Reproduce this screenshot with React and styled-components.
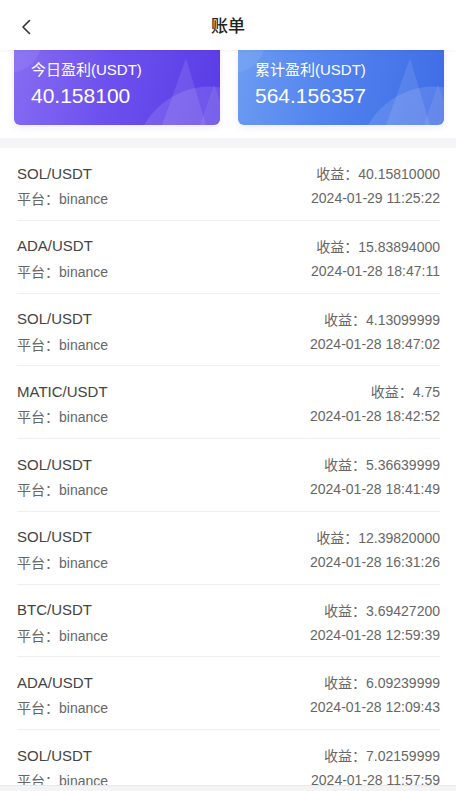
import React from 'react'
import styled, { createGlobalStyle } from 'styled-components'

const GlobalStyle = createGlobalStyle`
    html, body {
        margin: 0;
        padding: 0;
        background: #fff;
        font-family: "Liberation Sans", "Noto Sans CJK SC", sans-serif;
    }
    * {
        box-sizing: border-box;
    }
`

const records = [
    { pair: 'SOL/USDT', profit: '40.15810000', time: '2024-01-29 11:25:22' },
    { pair: 'ADA/USDT', profit: '15.83894000', time: '2024-01-28 18:47:11' },
    { pair: 'SOL/USDT', profit: '4.13099999', time: '2024-01-28 18:47:02' },
    { pair: 'MATIC/USDT', profit: '4.75', time: '2024-01-28 18:42:52' },
    { pair: 'SOL/USDT', profit: '5.36639999', time: '2024-01-28 18:41:49' },
    { pair: 'SOL/USDT', profit: '12.39820000', time: '2024-01-28 16:31:26' },
    { pair: 'BTC/USDT', profit: '3.69427200', time: '2024-01-28 12:59:39' },
    { pair: 'ADA/USDT', profit: '6.09239999', time: '2024-01-28 12:09:43' },
    { pair: 'SOL/USDT', profit: '7.02159999', time: '2024-01-28 11:57:59' },
]

const CardArt = () => (
    <Art viewBox="0 0 206 82" preserveAspectRatio="none">
        <circle cx="-4" cy="-2" r="32" fill="rgba(255,255,255,0.08)" />
        <path d="M148 82 L172 16 L192 82 Z" fill="rgba(255,255,255,0.10)" />
        <circle cx="196" cy="120" r="76" fill="rgba(255,255,255,0.12)" />
        <path d="M186 82 L200 42 L206 58 L206 82 Z" fill="rgba(255,255,255,0.08)" />
    </Art>
)

const App = () => {
    return (
        <>
            <GlobalStyle />
            <Page>
                <Header>
                    <BackButton>
                        <svg width="10" height="16" viewBox="0 0 10 16">
                            <path d="M8.5 1.5 L2 8 L8.5 14.5" fill="none" stroke="#333" strokeWidth="1.6" strokeLinecap="round" strokeLinejoin="round" />
                        </svg>
                    </BackButton>
                    <HeaderTitle>账单</HeaderTitle>
                </Header>
                <Scroll>
                    <Summary>
                        <Card variant="purple">
                            <CardArt />
                            <CardLabel>今日盈利(USDT)</CardLabel>
                            <CardValue>40.158100</CardValue>
                        </Card>
                        <Card variant="blue">
                            <CardArt />
                            <CardLabel>累计盈利(USDT)</CardLabel>
                            <CardValue>564.156357</CardValue>
                        </Card>
                    </Summary>
                    <List>
                        {records.map((r, i) => (
                            <Row key={i}>
                                <Line>
                                    <Pair>{r.pair}</Pair>
                                    <Meta>收益：{r.profit}</Meta>
                                </Line>
                                <Line>
                                    <Meta>平台：binance</Meta>
                                    <Meta>{r.time}</Meta>
                                </Line>
                            </Row>
                        ))}
                    </List>
                </Scroll>
                <BottomBar />
            </Page>
        </>
    )
}

export default App

const Page = styled.div`
    height: 100vh;
    display: flex;
    flex-direction: column;
    overflow: hidden;
    background: #fff;
`

const Header = styled.header`
    position: relative;
    z-index: 2;
    flex: 0 0 50px;
    display: flex;
    align-items: center;
    justify-content: center;
    background: #fff;
    box-shadow: 0 1px 3px rgba(0, 0, 0, 0.05);
`

const BackButton = styled.div`
    position: absolute;
    left: 21px;
    top: 19px;
    display: flex;
`

const HeaderTitle = styled.h1`
    margin: 0;
    font-size: 17px;
    font-weight: 500;
    color: #222;
    line-height: 1;
    padding-top: 3px;
`

const Scroll = styled.div`
    flex: 1;
    overflow: hidden;
    background: #f5f5f7;
`

const Summary = styled.section`
    display: grid;
    grid-template-columns: 206px 206px;
    column-gap: 18px;
    padding: 0 12px 13px 14px;
    margin-top: -8px;
    background: #fff;
`

const Card = styled.div`
    position: relative;
    overflow: hidden;
    height: 83px;
    border-radius: 6px;
    padding: 18px 17px 0;
    color: #fff;
    box-shadow: 0 2px 6px rgba(80, 90, 200, 0.12);
    background: ${({ variant }) => variant === 'purple'
        ? 'linear-gradient(100deg, #866cf2 0%, #6d51ee 45%, #5a3ce6 100%)'
        : 'linear-gradient(100deg, #6c9cf2 0%, #5283ee 45%, #3f6ce6 100%)'};
`

const Art = styled.svg`
    position: absolute;
    inset: 0;
    width: 100%;
    height: 100%;
`

const CardLabel = styled.div`
    position: relative;
    font-size: 15px;
    line-height: 20px;
`

const CardValue = styled.div`
    position: relative;
    margin-top: 3px;
    font-size: 21px;
    line-height: 26px;
`

const List = styled.section`
    margin-top: 10px;
    background: #fff;
`

const Row = styled.div`
    height: 72.75px;
    margin: 0 16px 0 17px;
    padding-top: 14px;
    border-bottom: 1px solid #efefef;
    display: flex;
    flex-direction: column;
    gap: 3px;
`

const Line = styled.div`
    display: flex;
    justify-content: space-between;
    align-items: center;
    height: 22px;
`

const Pair = styled.span`
    font-size: 15px;
    color: #444;
`

const Meta = styled.span`
    font-size: 14px;
    color: #666;
`

const BottomBar = styled.div`
    flex: 0 0 6px;
    background: #f4f4f4;
    border-top: 1px solid #e8e8e8;
`
